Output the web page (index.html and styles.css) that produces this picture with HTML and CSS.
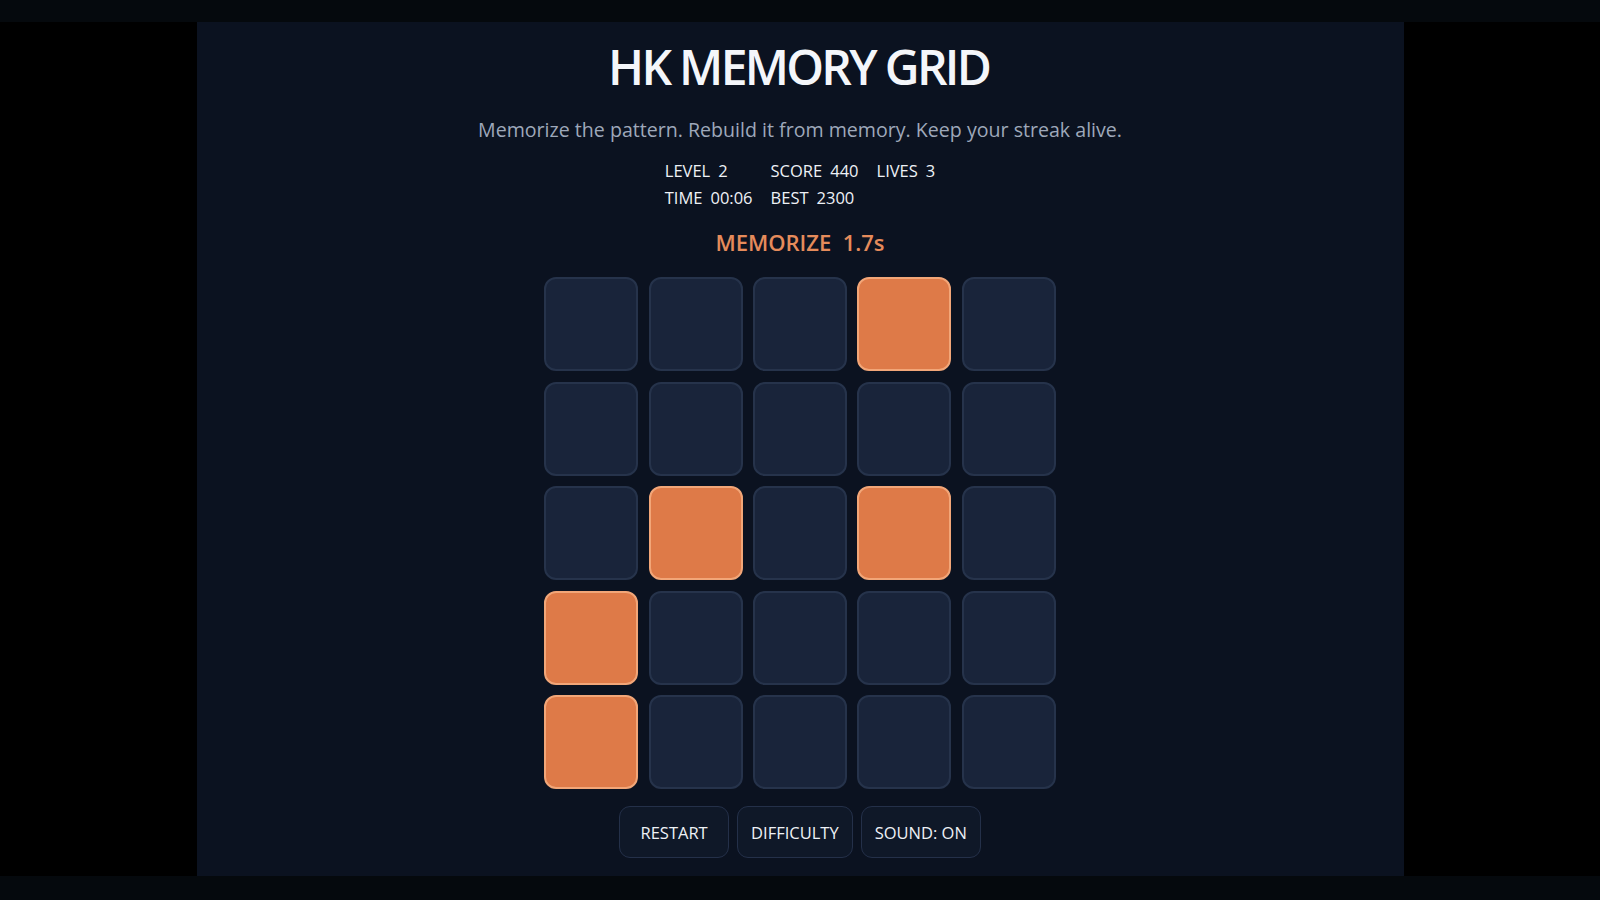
FILE: index.html
```html
<!DOCTYPE html>
<html lang="en">
<head>
<meta charset="utf-8">
<title>HK Memory Grid</title>
<link rel="stylesheet" href="styles.css">
</head>
<body>
<div class="frame">
  <div class="bar bar-top"></div>
  <div class="stage">
    <main class="panel">
      <h1 class="title">HK MEMORY GRID</h1>
      <p class="subtitle">Memorize the pattern. Rebuild it from memory. Keep your streak alive.</p>
      <div class="stats">
        <div class="stat"><span>LEVEL</span><span>2</span></div>
        <div class="stat"><span>SCORE</span><span>440</span></div>
        <div class="stat"><span>LIVES</span><span>3</span></div>
        <div class="stat"><span>TIME</span><span>00:06</span></div>
        <div class="stat"><span>BEST</span><span>2300</span></div>
      </div>
      <div class="phase">MEMORIZE&nbsp; 1.7s</div>
      <div class="grid">
        <div class="cell"></div><div class="cell"></div><div class="cell"></div><div class="cell on"></div><div class="cell"></div>
        <div class="cell"></div><div class="cell"></div><div class="cell"></div><div class="cell"></div><div class="cell"></div>
        <div class="cell"></div><div class="cell on"></div><div class="cell"></div><div class="cell on"></div><div class="cell"></div>
        <div class="cell on"></div><div class="cell"></div><div class="cell"></div><div class="cell"></div><div class="cell"></div>
        <div class="cell on"></div><div class="cell"></div><div class="cell"></div><div class="cell"></div><div class="cell"></div>
      </div>
      <div class="controls">
        <button class="btn">RESTART</button>
        <button class="btn">DIFFICULTY</button>
        <button class="btn">SOUND: ON</button>
      </div>
    </main>
  </div>
  <div class="bar bar-bottom"></div>
</div>
</body>
</html>
```
FILE: styles.css
```css
html, body {
  margin: 0;
  padding: 0;
  background: #000;
  font-family: "Open Sans", "Noto Sans", sans-serif;
}

.frame {
  height: 100vh;
  display: flex;
  flex-direction: column;
}

.bar {
  background: #05090d;
}
.bar-top { height: 22px; }
.bar-bottom { height: 24px; }

.stage {
  flex: 1;
  display: flex;
  justify-content: center;
  background: #000;
}

.panel {
  width: 1207px;
  background: #0b1220;
  display: flex;
  flex-direction: column;
  align-items: center;
  padding-top: 15px;
  box-sizing: border-box;
}

.title {
  margin: 0;
  font-size: 48px;
  line-height: 60px;
  font-weight: 600;
  color: #f4f6fa;
  letter-spacing: -2.7px;
  text-indent: -2.7px;
}

.subtitle {
  margin: 20px 0 0;
  font-size: 19.6px;
  line-height: 26px;
  color: #9ea8ba;
}

.stats {
  margin-top: 16px;
  display: grid;
  grid-template-columns: auto auto auto;
  column-gap: 18px;
  row-gap: 3px;
  font-size: 16.5px;
  line-height: 24px;
  font-weight: 500;
  color: #eef1f6;
}

.stat {
  display: flex;
  gap: 8px;
}

.phase {
  margin-top: 17px;
  font-size: 22px;
  line-height: 30px;
  font-weight: 600;
  color: #e58b5b;
}

.grid {
  margin-top: 20px;
  display: grid;
  grid-template-columns: repeat(5, 94px);
  grid-auto-rows: 94px;
  column-gap: 10.3px;
  row-gap: 10.5px;
}

.cell {
  box-sizing: border-box;
  border-radius: 12px;
  background: #19243a;
  border: 2px solid #26334b;
}

.cell.on {
  background: #de7a48;
  border-color: #f2a678;
}

.controls {
  margin-top: 17px;
  display: flex;
  gap: 8px;
}

.btn {
  height: 52px;
  min-width: 110px;
  padding: 0 13px;
  box-sizing: border-box;
  background: #0f1828;
  border: 1.5px solid #243049;
  border-radius: 11px;
  color: #eef1f6;
  font-family: "Open Sans", "Noto Sans", sans-serif;
  font-size: 16.5px;
  font-weight: 500;
}
```
